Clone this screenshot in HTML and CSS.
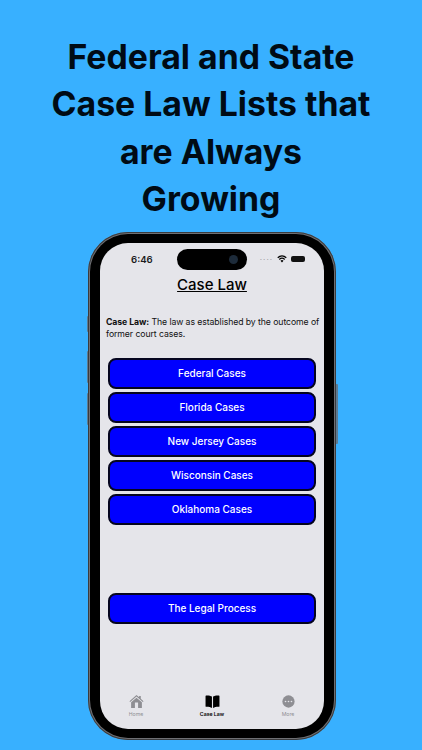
FILE: index.html
```html
<!DOCTYPE html>
<html lang="en">
<head>
<meta charset="utf-8">
<title>Case Law</title>
<link rel="stylesheet" href="styles.css">
</head>
<body>
<main class="page">
  <h1 class="headline">Federal and State<br>Case Law Lists that<br>are Always<br>Growing</h1>
  <div class="phone">
    <span class="side side-mute"></span>
    <span class="side side-up"></span>
    <span class="side side-down"></span>
    <span class="side side-power"></span>
    <div class="bezel">
      <div class="screen">
        <div class="status">
          <span class="time">6:46</span>
          <div class="island"><span class="lens"></span></div>
          <div class="status-icons">
            <span class="signal">....</span>
            <svg class="wifi" viewBox="0 0 16 12" aria-hidden="true"><path d="M8 11.500 5.600 8.700a3.600 3.600 0 0 1 4.800 0zM4.400 7.400 3 5.800a7.600 7.600 0 0 1 10 0l-1.400 1.600a5.400 5.400 0 0 0-7.200 0zM1.900 4.600.5 3a11.400 11.400 0 0 1 15 0l-1.400 1.600a9.300 9.300 0 0 0-12.200 0z"/></svg>
            <span class="battery"></span>
          </div>
        </div>
        <h2 class="title">Case Law</h2>
        <p class="definition"><strong>Case Law:</strong> The law as established by the outcome of former court cases.</p>
        <div class="buttons">
          <a class="btn">Federal Cases</a>
          <a class="btn">Florida Cases</a>
          <a class="btn">New Jersey Cases</a>
          <a class="btn">Wisconsin Cases</a>
          <a class="btn">Oklahoma Cases</a>
        </div>
        <div class="buttons process">
          <a class="btn">The Legal Process</a>
        </div>
        <nav class="tabs">
          <div class="tab">
            <svg class="tab-icon" viewBox="0 0 16 14" aria-hidden="true"><path d="M8 0 .4 6.600l.8.9L8 1.700l6.800 5.800.8-.9L12.600 4V1h-1.800v1.500z"/><path fill-rule="evenodd" d="M8 2.900 2.200 7.800V14h11.600V7.800zM6.300 8.200h3.400V14H6.300z"/></svg>
            <span>Home</span>
          </div>
          <div class="tab active">
            <svg class="tab-icon" viewBox="0 0 16 14" aria-hidden="true"><path d="M7.400 1.700C6 .7 3.500 .3 1.200 .5.700 .6.500 .8.500 1.300v10.700c0 .4.300 .6.700 .6 2.300-.1 4.500.2 6.200 1.400zM8.600 1.700C10 .7 12.500 .3 14.800 .5c.5.1.7.3.7.8v10.700c0 .4-.3.6-.7.6-2.300-.1-4.500.2-6.200 1.400z"/></svg>
            <span>Case Law</span>
          </div>
          <div class="tab">
            <svg class="tab-icon" viewBox="0 0 16 14" aria-hidden="true"><circle cx="8" cy="7" r="6.600"/><circle class="dot" cx="4.800" cy="7" r=".9"/><circle class="dot" cx="8" cy="7" r=".9"/><circle class="dot" cx="11.200" cy="7" r=".9"/></svg>
            <span>More</span>
          </div>
        </nav>
      </div>
    </div>
  </div>
</main>
</body>
</html>
```
FILE: styles.css
```css
* { box-sizing: border-box; }
html, body { margin: 0; padding: 0; }
body {
  width: 422px;
  height: 750px;
  overflow: hidden;
  background: #38b0ff;
  font-family: Inter, "Liberation Sans", Arial, sans-serif;
}
.page {
  display: flex;
  flex-direction: column;
  align-items: center;
  height: 750px;
  padding-top: 33px;
}
.headline {
  margin: 0;
  font-family: Inter, sans-serif;
  font-size: 33.800px;
  font-weight: 700;
  line-height: 47.400px;
  color: #000b15;
  text-align: center;
}
.phone {
  position: relative;
  width: 248px;
  height: 508px;
  margin: 9px 0 0 2px;
  padding: 2px;
  border-radius: 40px;
  background: #6e6f73;
  box-shadow: inset 0 0 0 1px #3a3b3e;
}
.side {
  position: absolute;
  width: 1.500px;
  background: #5d7a90;
}
.side-mute { left: -1.500px; top: 84px; height: 16px; border-radius: 1px 0 0 1px; }
.side-up { left: -1.500px; top: 119px; height: 32px; border-radius: 1px 0 0 1px; }
.side-down { left: -1.500px; top: 161px; height: 32px; border-radius: 1px 0 0 1px; }
.side-power { right: -1.500px; top: 152px; height: 60px; border-radius: 0 1px 1px 0; }
.bezel {
  height: 100%;
  padding: 9px 10px;
  border-radius: 38px;
  background: #000;
}
.screen {
  display: flex;
  flex-direction: column;
  height: 100%;
  overflow: hidden;
  border-radius: 28px;
  background: #e5e5ea;
  color: #000;
}
.status {
  position: relative;
  display: flex;
  align-items: center;
  justify-content: space-between;
  flex: none;
  height: 32px;
  padding: 1px 19px 0 31px;
}
.time { font-size: 9.600px; font-weight: 600; color: #1c1c1e; }
.island {
  position: absolute;
  left: 77px;
  top: 6px;
  width: 70px;
  height: 21px;
  border-radius: 11px;
  background: #000;
}
.lens {
  position: absolute;
  right: 9px;
  top: 6px;
  width: 9px;
  height: 9px;
  border-radius: 50%;
  background: #1d2b3a;
}
.status-icons { display: flex; align-items: center; gap: 4px; }
.signal { font-size: 8px; line-height: 8px; letter-spacing: 1px; color: #9a9aa0; margin-top: -4px; }
.wifi { width: 10px; height: 8px; fill: #000; }
.battery {
  width: 14px;
  height: 6px;
  border-radius: 2px;
  background: #111;
}
.title {
  flex: none;
  margin: 0;
  font-size: 15px;
  font-weight: 500;
  line-height: 20px;
  text-align: center;
  text-decoration: underline;
}
.definition {
  flex: none;
  margin: 21px 0 0;
  padding: 0 4px 0 6px;
  font-size: 8.700px;
  letter-spacing: -.08px;
  line-height: 12px;
  color: #111;
}
.buttons {
  display: flex;
  flex-direction: column;
  flex: none;
  gap: 2.800px;
  margin-top: 18px;
  padding: 0 8px;
}
.process { margin-top: 68px; }
.btn {
  display: flex;
  align-items: center;
  justify-content: center;
  height: 31.200px;
  border: 2px solid #05051f;
  border-radius: 8px;
  background: #0000ff;
  color: #fff;
  font-size: 10px;
  font-weight: 500;
}
.tabs {
  display: grid;
  grid-template-columns: repeat(3, 1fr);
  flex: none;
  margin: auto -2px 0;
  padding: 0 0 11px;
}
.tab {
  display: flex;
  flex-direction: column;
  align-items: center;
  gap: 3px;
  font-size: 5.200px;
  line-height: 7px;
  color: #8e8e93;
}
.tab-icon { width: 15px; height: 13px; fill: #8e8e93; }
.tab-icon .dot { fill: #e5e5ea; }
.tab.active { color: #000; font-weight: 600; }
.tab.active .tab-icon { fill: #000; }
```
